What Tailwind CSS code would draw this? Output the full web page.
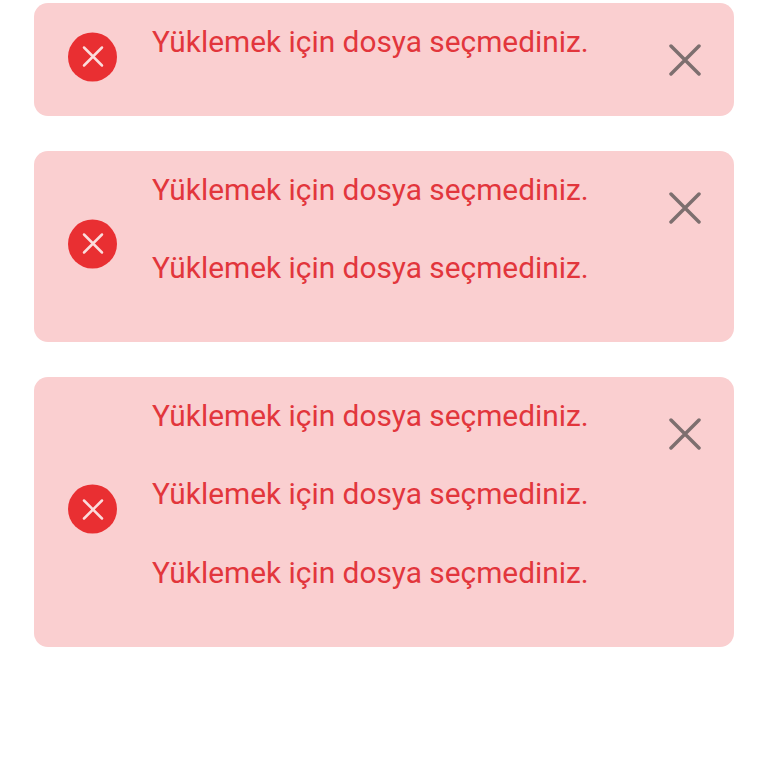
<!DOCTYPE html>
<html>
<head>
<meta charset="utf-8">
<title>Uyarılar</title>
<script src="https://cdn.jsdelivr.net/npm/@tailwindcss/browser@4"></script>
</head>
<body class="bg-white font-['Roboto',sans-serif]">
<div class="flex flex-col gap-[35px] pt-[3px] px-[34px]">

  <div class="flex items-center rounded-[14px] bg-[#facfd0] pb-[34px] text-[#e2363c]">
    <div class="ml-[34px] translate-y-[14.5px] flex h-[49px] w-[49px] shrink-0 items-center justify-center rounded-full bg-[#e92f32]">
      <svg class="h-[24px] w-[24px]" viewBox="0 0 24 24" fill="none" stroke="#fbdcdc" stroke-width="2.5" stroke-linecap="round"><path d="M3 3 21 21M21 3 3 21"/></svg>
    </div>
    <div class="ml-[35px] flex-1 text-[29.85px] leading-[78.6px]">
      <p>Yüklemek için dosya seçmediniz.</p>
    </div>
    <svg class="mr-[33px] mt-[41px] h-[32px] w-[32px] shrink-0 self-start" viewBox="0 0 32 32" fill="none" stroke="#7d6f6f" stroke-width="3.5" stroke-linecap="round"><path d="M2 2 30 30M30 2 2 30"/></svg>
  </div>

  <div class="flex items-center rounded-[14px] bg-[#facfd0] pb-[34px] text-[#e2363c]">
    <div class="ml-[34px] translate-y-[14.5px] flex h-[49px] w-[49px] shrink-0 items-center justify-center rounded-full bg-[#e92f32]">
      <svg class="h-[24px] w-[24px]" viewBox="0 0 24 24" fill="none" stroke="#fbdcdc" stroke-width="2.5" stroke-linecap="round"><path d="M3 3 21 21M21 3 3 21"/></svg>
    </div>
    <div class="ml-[35px] flex-1 text-[29.85px] leading-[78.6px]">
      <p>Yüklemek için dosya seçmediniz.</p>
      <p>Yüklemek için dosya seçmediniz.</p>
    </div>
    <svg class="mr-[33px] mt-[41px] h-[32px] w-[32px] shrink-0 self-start" viewBox="0 0 32 32" fill="none" stroke="#7d6f6f" stroke-width="3.5" stroke-linecap="round"><path d="M2 2 30 30M30 2 2 30"/></svg>
  </div>

  <div class="flex items-center rounded-[14px] bg-[#facfd0] pb-[34px] text-[#e2363c]">
    <div class="ml-[34px] translate-y-[14.5px] flex h-[49px] w-[49px] shrink-0 items-center justify-center rounded-full bg-[#e92f32]">
      <svg class="h-[24px] w-[24px]" viewBox="0 0 24 24" fill="none" stroke="#fbdcdc" stroke-width="2.5" stroke-linecap="round"><path d="M3 3 21 21M21 3 3 21"/></svg>
    </div>
    <div class="ml-[35px] flex-1 text-[29.85px] leading-[78.6px]">
      <p>Yüklemek için dosya seçmediniz.</p>
      <p>Yüklemek için dosya seçmediniz.</p>
      <p>Yüklemek için dosya seçmediniz.</p>
    </div>
    <svg class="mr-[33px] mt-[41px] h-[32px] w-[32px] shrink-0 self-start" viewBox="0 0 32 32" fill="none" stroke="#7d6f6f" stroke-width="3.5" stroke-linecap="round"><path d="M2 2 30 30M30 2 2 30"/></svg>
  </div>

</div>
</body>
</html>
